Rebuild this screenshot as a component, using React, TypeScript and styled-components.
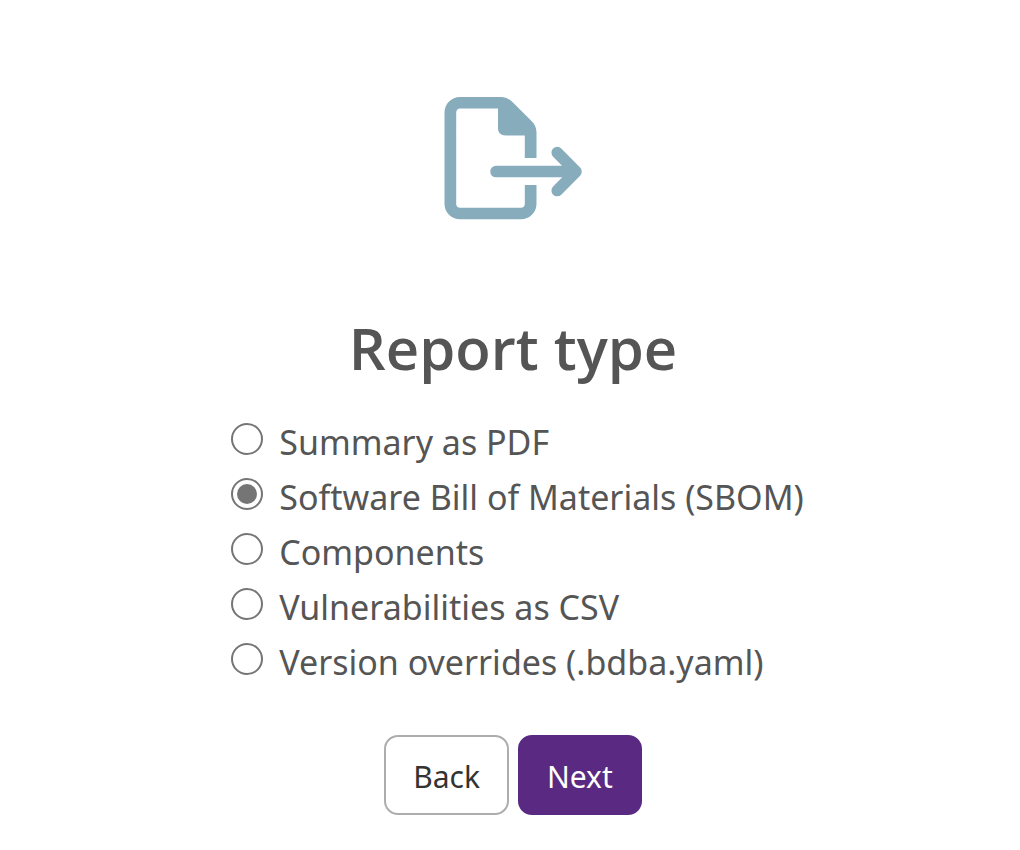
import React, { useState } from "react";
import styled, { createGlobalStyle } from "styled-components";

const GlobalStyle = createGlobalStyle`
  *, *::before, *::after { box-sizing: border-box; }
  body {
    margin: 0;
    background: #fff;
    color: #555;
    font-family: "Segoe UI", "Noto Sans", sans-serif;
  }
`;

const Page = styled.main`
  display: flex;
  flex-direction: column;
  align-items: center;
  padding: 97px 16px 32px 22px;
`;

const Icon = styled.svg`
  display: block;
  width: 138px;
  height: 123px;
`;

const Title = styled.h1`
  margin: 88px 0 0;
  font-family: "Segoe UI", "Open Sans", sans-serif;
  font-size: 58px;
  font-weight: 600;
  line-height: 80px;
`;

const Options = styled.fieldset`
  display: flex;
  flex-direction: column;
  margin: 27px 0 0;
  padding: 0 0 0 9px;
  border: 0;
`;

const Option = styled.label`
  display: flex;
  align-items: center;
  gap: 16px;
  font-size: 34px;
  line-height: 55px;
  cursor: pointer;
`;

const Radio = styled.input`
  appearance: none;
  flex: none;
  display: grid;
  place-items: center;
  width: 32px;
  height: 32px;
  margin: 0 0 8px;
  border: 2px solid #757575;
  border-radius: 50%;
  background: #fff;

  &:checked::before {
    content: "";
    width: 20px;
    height: 20px;
    border-radius: 50%;
    background: #757575;
  }
`;

const Actions = styled.div`
  display: flex;
  gap: 9px;
  margin-top: 45px;
`;

const Button = styled.button<{ $primary?: boolean }>`
  height: 80px;
  padding: 4px 27px 0;
  border: 2px solid ${(p) => (p.$primary ? "#5a2a82" : "#adadad")};
  border-radius: 14px;
  background: ${(p) => (p.$primary ? "#5a2a82" : "#fff")};
  color: ${(p) => (p.$primary ? "#fff" : "#333")};
  font-family: inherit;
  font-size: 30px;
  line-height: 44px;
  cursor: pointer;
`;

const reportTypes = [
  "Summary as PDF",
  "Software Bill of Materials (SBOM)",
  "Components",
  "Vulnerabilities as CSV",
  "Version overrides (.bdba.yaml)",
];

function ExportIcon() {
  return (
    <Icon viewBox="0 0 138 123" aria-hidden="true">
      <path
        fill="#87acbc"
        fillRule="evenodd"
        d="M0.500 15.500C0.500 7 7.500 0 16 0H57C61 0 65 1.600 67.900 4.500L88 24.600C90.900 27.500 92.500 31.400 92.500 35.500V61H80.800V38.500H61.500C57 38.500 54 35.500 54 31.500V11.500H16C13.700 11.500 12.200 13.200 12.200 15.500V107C12.200 109.300 13.700 110.800 16 110.800H77C79.300 110.800 80.800 109.300 80.800 107V88H92.500V107C92.500 115.500 85.500 122.300 77 122.300H16C7.500 122.300 0.500 115.500 0.500 107Z"
      />
      <path
        fill="none"
        stroke="#87acbc"
        strokeWidth="11.5"
        strokeLinecap="round"
        strokeLinejoin="round"
        d="M52 74.600H128M113.200 55.600L132 74.600L113.200 93.600"
      />
    </Icon>
  );
}

export default function App() {
  const [selected, setSelected] = useState(reportTypes[1]);

  return (
    <>
      <GlobalStyle />
      <Page>
        <ExportIcon />
        <Title id="report-type">Report type</Title>
        <Options aria-labelledby="report-type">
          {reportTypes.map((type) => (
            <Option key={type}>
              <Radio
                type="radio"
                name="report-type"
                value={type}
                checked={selected === type}
                onChange={() => setSelected(type)}
              />
              {type}
            </Option>
          ))}
        </Options>
        <Actions>
          <Button type="button">Back</Button>
          <Button type="button" $primary>
            Next
          </Button>
        </Actions>
      </Page>
    </>
  );
}
